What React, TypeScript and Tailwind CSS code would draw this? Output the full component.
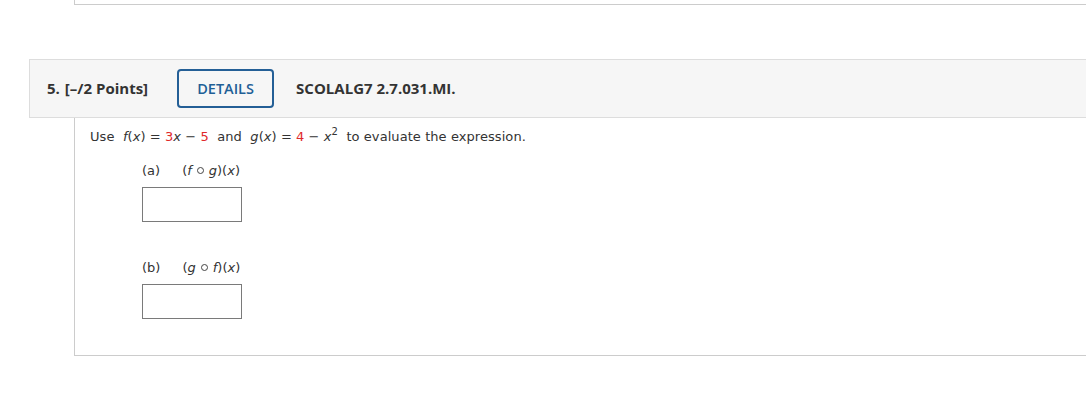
import React from 'react';

const Red: React.FC<{ children: React.ReactNode }> = ({ children }) => (
    <span className="text-[#e0282a]">{children}</span>
);

const I: React.FC<{ children: React.ReactNode }> = ({ children }) => <i className="italic">{children}</i>;

const Compose: React.FC = () => (
    <span className="inline-block mx-[5px] w-[7px] h-[7px] rounded-full border-[1.5px] border-[#444] align-[1px]" />
);

const AnswerBox: React.FC = () => (
    <input
        type="text"
        readOnly
        className="block w-[100px] h-[35px] border border-[#7a7a7a] bg-white outline-none"
    />
);

export default function App() {
    return (
        <div className="w-full h-[403px] bg-white overflow-hidden text-[#333]">
            {/* previous question box (bottom edge) */}
            <div className="ml-[74px] h-[5px] border-l border-b border-[#cccccc]" />

            {/* question header */}
            <div className="mt-[54px] ml-[29px] h-[59px] flex items-center bg-[#f6f6f6] border-y border-l border-[#dddddd] pl-[17px] [font-family:'Open_Sans',sans-serif] text-[15px] font-bold">
                <span className="text-[#333]">5.</span>
                <span className="ml-[5px] text-[#333]">[–/2 Points]</span>
                <button className="ml-[29px] w-[97px] h-[39px] rounded-[4px] border-2 border-[#245f96] text-[#1f5f96] text-[14.5px] font-semibold">
                    DETAILS
                </button>
                <span className="ml-[22px] text-[#333]">SCOLALG7 2.7.031.MI.</span>
            </div>

            {/* question body */}
            <div className="ml-[74px] h-[238px] border-l border-b border-[#cccccc] pl-[15px] pt-[11px] [font-family:'DejaVu_Sans',Verdana,sans-serif] text-[13px] text-[#333]">
                <p className="leading-[16px] tracking-[0.07px]">
                    Use&nbsp;&nbsp;<I>f</I>(<I>x</I>) = <Red>3</Red><I>x</I> − <Red>5</Red>&nbsp;&nbsp;and&nbsp;&nbsp;<I>g</I>(<I>x</I>) = <Red>4</Red> − <I>x</I>
                    <sup className="text-[10px] -top-[6px]">2</sup>&nbsp;&nbsp;to evaluate the expression.
                </p>

                <div className="ml-[52px] mt-[18px]">
                    <div className="flex items-center leading-[16px]">
                        <span>(a)</span>
                        <span className="ml-[22px]">(<I>f</I><Compose /><I>g</I>)(<I>x</I>)</span>
                    </div>
                    <div className="mt-[8px]">
                        <AnswerBox />
                    </div>

                    <div className="flex items-center leading-[16px] mt-[38px]">
                        <span>(b)</span>
                        <span className="ml-[22px]">(<I>g</I><Compose /><I>f</I>)(<I>x</I>)</span>
                    </div>
                    <div className="mt-[8px]">
                        <AnswerBox />
                    </div>
                </div>
            </div>
        </div>
    );
}
